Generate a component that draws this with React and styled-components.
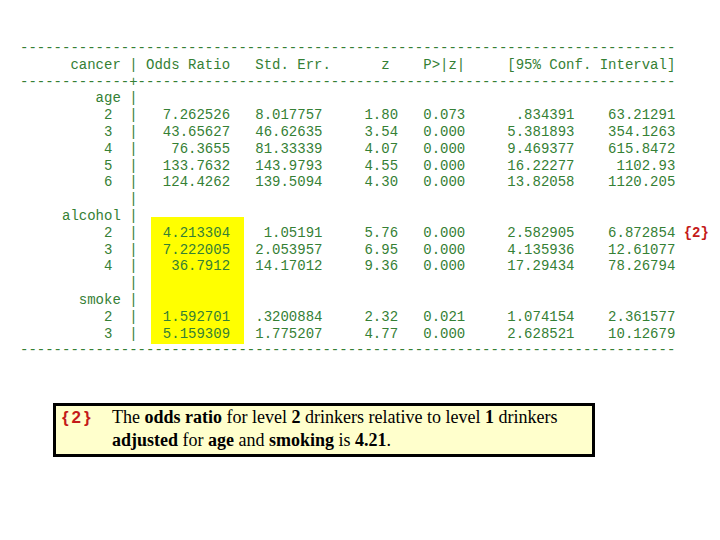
import React from 'react';
import styled, { createGlobalStyle } from 'styled-components';

const GlobalStyle = createGlobalStyle`
  html, body {
    margin: 0;
    padding: 0;
    background: #ffffff;
  }
`;

const Page = styled.main`
  width: 720px;
  height: 540px;
  box-sizing: border-box;
  padding: 40px 0 0 20px;
  overflow: hidden;
`;

const Output = styled.div`
  position: relative;
  font-family: "Liberation Mono", "DejaVu Sans Mono", monospace;
  font-size: 14px;
  line-height: 16.8px;
  color: #358035;
`;

const Highlight = styled.div`
  position: absolute;
  left: 131px;
  top: 177px;
  width: 93px;
  height: 127px;
  background: #ffff00;
`;

const Line = styled.div`
  position: relative;
  white-space: pre;
  height: 16.8px;
`;

const Marker = styled.span`
  color: #c41a1a;
  font-weight: bold;
  font-family: ${(p) => (p.$box ? '"Liberation Sans", Arial, sans-serif' : '"Liberation Mono", monospace')};
  font-size: ${(p) => (p.$box ? '17px' : '14px')};
  letter-spacing: ${(p) => (p.$box ? '3px' : '0')};
`;

const Note = styled.div`
  display: grid;
  grid-template-columns: 50px 1fr;
  width: 542px;
  height: 54px;
  box-sizing: border-box;
  margin: 44px 0 0 33px;
  padding: 0 0 0 6px;
  background: #ffffcc;
  border: 3px solid #000000;
`;

const NoteText = styled.p`
  margin: 0;
  font-family: "Liberation Serif", "Times New Roman", serif;
  font-size: 18px;
  line-height: 23px;
  color: #000000;
`;

const MarkerCell = styled.div`
  line-height: 23px;
`;

const dash = '-'.repeat(78);

const groups = [
  {
    name: 'age',
    rows: [
      ['2', '7.262526', '8.017757', '1.80', '0.073', '.834391', '63.21291'],
      ['3', '43.65627', '46.62635', '3.54', '0.000', '5.381893', '354.1263'],
      ['4', '76.3655', '81.33339', '4.07', '0.000', '9.469377', '615.8472'],
      ['5', '133.7632', '143.9793', '4.55', '0.000', '16.22277', '1102.93'],
      ['6', '124.4262', '139.5094', '4.30', '0.000', '13.82058', '1120.205'],
    ],
  },
  {
    name: 'alcohol',
    rows: [
      ['2', '4.213304', '1.05191', '5.76', '0.000', '2.582905', '6.872854', true],
      ['3', '7.222005', '2.053957', '6.95', '0.000', '4.135936', '12.61077'],
      ['4', '36.7912', '14.17012', '9.36', '0.000', '17.29434', '78.26794'],
    ],
  },
  {
    name: 'smoke',
    rows: [
      ['2', '1.592701', '.3200884', '2.32', '0.021', '1.074154', '2.361577'],
      ['3', '5.159309', '1.775207', '4.77', '0.000', '2.628521', '10.12679'],
    ],
  },
];

// lay a row out in Stata's fixed columns
const fmtRow = ([lvl, or, se, z, p, lo, hi]) =>
  ' '.repeat(10) + lvl + '  |' +
  or.padStart(11) + se.padStart(11) + z.padStart(9) +
  p.padStart(8) + lo.padStart(13) + hi.padStart(12);

function App() {
  const lines = [];
  groups.forEach((g, gi) => {
    if (gi > 0) lines.push({ text: '             |' });
    lines.push({ text: g.name.padStart(12) + ' |' });
    g.rows.forEach((r) => lines.push({ text: fmtRow(r), note: r[7] }));
  });

  return (
    <>
      <GlobalStyle />
      <Page>
        <Output>
          <Highlight />
          <Line>{dash}</Line>
          <Line>{'      cancer | Odds Ratio   Std. Err.      z    P>|z|     [95% Conf. Interval]'}</Line>
          <Line>{'-'.repeat(13) + '+' + '-'.repeat(64)}</Line>
          {lines.map((l, i) => (
            <Line key={i}>
              {l.text}
              {l.note && (
                <>
                  {' '}
                  <Marker>{'{2}'}</Marker>
                </>
              )}
            </Line>
          ))}
          <Line>{dash}</Line>
        </Output>
        <Note>
          <MarkerCell>
            <Marker $box>{'{2}'}</Marker>
          </MarkerCell>
          <NoteText>
            The <b>odds ratio</b> for level <b>2</b> drinkers relative to level <b>1</b> drinkers{' '}
            <b>adjusted</b> for <b>age</b> and <b>smoking</b> is <b>4.21</b>.
          </NoteText>
        </Note>
      </Page>
    </>
  );
}

export default App;
